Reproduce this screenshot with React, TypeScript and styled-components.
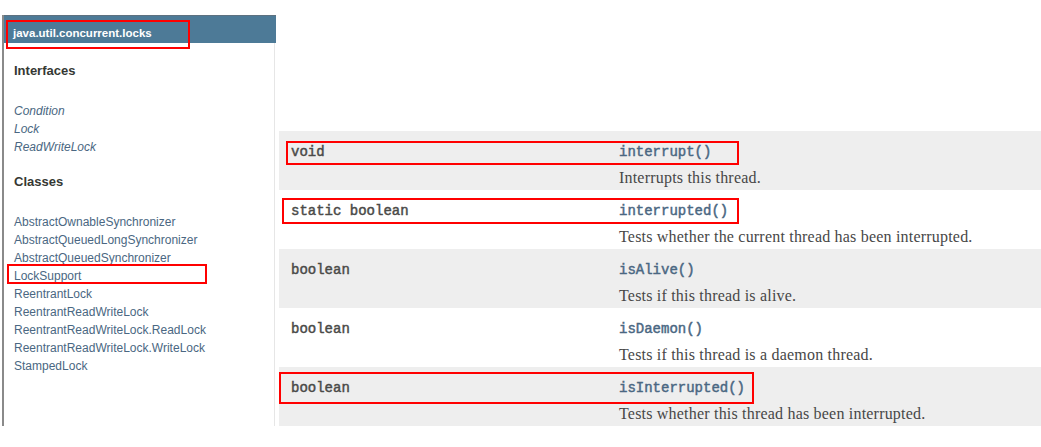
import React from "react";
import styled, { createGlobalStyle } from "styled-components";

const Global = createGlobalStyle`
  html, body { margin: 0; padding: 0; background: #ffffff; }
  body { font-family: "Liberation Sans", Arial, sans-serif; }
`;

const Page = styled.div`
  position: relative;
  width: 1041px;
  height: 447px;
  display: flex;
  align-items: flex-start;
  overflow: hidden;
`;

const Sidebar = styled.nav`
  margin: 15px 0 0 2px;
  width: 271px;
  height: 411px;
  border-left: 2px solid #8a8a8a;
  display: flex;
  flex-direction: column;
  flex-shrink: 0;
`;

const PackageBar = styled.div`
  height: 28px;
  border-top: 1px solid #5d7180;
  background: #4d7a97;
  color: #ffffff;
  font-weight: bold;
  font-size: 11.5px;
  line-height: 14px;
  box-sizing: border-box;
  padding: 10px 0 0 9px;
  margin-right: -1px;
`;

const SideBody = styled.div`
  flex: 1;
  border-right: 1px solid #e6e6e6;
  display: flex;
  flex-direction: column;
  padding-left: 10px;
`;

const Heading = styled.h2<{ $top: number }>`
  margin: ${(p) => p.$top}px 0 0 0;
  font-size: 13px;
  line-height: 18px;
  font-weight: bold;
  color: #353833;
`;

const List = styled.ul`
  list-style: none;
  margin: 22px 0 0 0;
  padding: 0;
`;

const Item = styled.li<{ $italic?: boolean }>`
  font-size: 12px;
  line-height: 18px;
  color: #4a6782;
  font-style: ${(p) => (p.$italic ? "italic" : "normal")};
  white-space: nowrap;
`;

const Main = styled.section`
  margin: 131px 0 0 4px;
  flex: 1;
  display: flex;
  flex-direction: column;
`;

const Row = styled.div<{ $alt: boolean }>`
  height: 59px;
  display: grid;
  grid-template-columns: 340px 1fr;
  grid-template-rows: 36px 23px;
  background: ${(p) => (p.$alt ? "#ffffff" : "#eeeeee")};
  box-sizing: border-box;
`;

const Mono = styled.div`
  grid-row: 1;
  align-self: center;
  padding-top: 6px;
  font-family: "Liberation Mono", "Courier New", monospace;
  font-size: 14px;
  font-weight: normal;
  -webkit-text-stroke: 0.45px currentColor;
  white-space: pre;
`;

const TypeCell = styled(Mono)`
  grid-column: 1;
  padding-left: 12px;
  color: #4a4a48;
`;

const MethodCell = styled(Mono)`
  grid-column: 2;
  color: #4a6782;
`;

const DescCell = styled.div`
  grid-row: 2;
  grid-column: 2;
  align-self: start;
  margin-top: 2px;
  font-family: "Liberation Serif", "Times New Roman", serif;
  font-size: 16px;
  letter-spacing: 0.2px;
  color: #474747;
  white-space: nowrap;
`;

const Mark = styled.div<{ $x: number; $y: number; $w: number; $h: number }>`
  position: absolute;
  left: ${(p) => p.$x}px;
  top: ${(p) => p.$y}px;
  width: ${(p) => p.$w}px;
  height: ${(p) => p.$h}px;
  border: 2px solid #ff0000;
  box-sizing: border-box;
  pointer-events: none;
`;

const interfaces = ["Condition", "Lock", "ReadWriteLock"];
const classes = [
  "AbstractOwnableSynchronizer",
  "AbstractQueuedLongSynchronizer",
  "AbstractQueuedSynchronizer",
  "LockSupport",
  "ReentrantLock",
  "ReentrantReadWriteLock",
  "ReentrantReadWriteLock.ReadLock",
  "ReentrantReadWriteLock.WriteLock",
  "StampedLock",
];

const methods = [
  { type: "void", name: "interrupt()", desc: "Interrupts this thread." },
  {
    type: "static boolean",
    name: "interrupted()",
    desc: "Tests whether the current thread has been interrupted.",
  },
  { type: "boolean", name: "isAlive()", desc: "Tests if this thread is alive." },
  {
    type: "boolean",
    name: "isDaemon()",
    desc: "Tests if this thread is a daemon thread.",
  },
  {
    type: "boolean",
    name: "isInterrupted()",
    desc: "Tests whether this thread has been interrupted.",
  },
];

const marks = [
  { x: 6, y: 20, w: 184, h: 29 },
  { x: 7, y: 264, w: 200, h: 20 },
  { x: 286, y: 141, w: 453, h: 24 },
  { x: 282, y: 198, w: 457, h: 26 },
  { x: 279, y: 372, w: 475, h: 32 },
];

export default function App() {
  return (
    <>
      <Global />
      <Page>
        <Sidebar>
          <PackageBar>java.util.concurrent.locks</PackageBar>
          <SideBody>
            <Heading $top={19}>Interfaces</Heading>
            <List>
              {interfaces.map((n) => (
                <Item key={n} $italic>
                  {n}
                </Item>
              ))}
            </List>
            <Heading $top={17}>Classes</Heading>
            <List>
              {classes.map((n) => (
                <Item key={n}>{n}</Item>
              ))}
            </List>
          </SideBody>
        </Sidebar>
        <Main>
          {methods.map((m, i) => (
            <Row key={m.name} $alt={i % 2 === 1}>
              <TypeCell>{m.type}</TypeCell>
              <MethodCell>{m.name}</MethodCell>
              <DescCell>{m.desc}</DescCell>
            </Row>
          ))}
        </Main>
        {marks.map((m, i) => (
          <Mark key={i} $x={m.x} $y={m.y} $w={m.w} $h={m.h} />
        ))}
      </Page>
    </>
  );
}
